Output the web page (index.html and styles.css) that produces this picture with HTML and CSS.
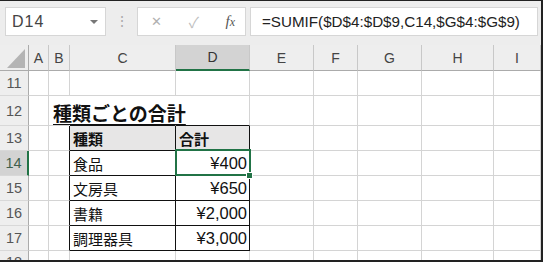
FILE: index.html
```html
<!DOCTYPE html>
<html lang="ja">
<head>
    <meta charset="UTF-8">
    <title>SUMIF - 種類ごとの合計</title>
    <link rel="stylesheet" href="styles.css">
</head>
<body>
<div class="frame">
    <!-- Name box + formula bar -->
    <div class="toolbar">
        <div class="name-box">
            <span>D14</span>
            <span class="drop"></span>
        </div>
        <div class="grip">⋮</div>
        <div class="fx-buttons">
            <span class="btn-x">✕</span>
            <span class="btn-ok">✓</span>
            <span class="btn-fx"><i>f</i><i>x</i></span>
        </div>
        <div class="formula">=SUMIF($D$4:$D$9,C14,$G$4:$G$9)</div>
    </div>

    <div class="sheet">
        <!-- column headers -->
        <div class="corner">
            <svg width="29" height="26" viewBox="0 0 29 26"><polygon points="25,4 25,23 7,23" fill="#b4b4b4"/></svg>
        </div>
        <div class="ch">A</div>
        <div class="ch">B</div>
        <div class="ch">C</div>
        <div class="ch ch-sel">D</div>
        <div class="ch">E</div>
        <div class="ch">F</div>
        <div class="ch">G</div>
        <div class="ch">H</div>
        <div class="ch">I</div>

        <!-- 11 -->
        <div class="rh">11</div>
        <div class="c"></div><div class="c"></div><div class="c"></div><div class="c"></div>
        <div class="c"></div><div class="c"></div><div class="c"></div><div class="c"></div><div class="c"></div>

        <!-- 12 -->
        <div class="rh">12</div>
        <div class="c"></div>
        <div class="c no-r"><span class="title">種類ごとの合計</span></div>
        <div class="c no-r edge-b"></div>
        <div class="c edge-b"></div>
        <div class="c"></div><div class="c"></div><div class="c"></div><div class="c"></div><div class="c"></div>

        <!-- 13 -->
        <div class="rh">13</div>
        <div class="c"></div>
        <div class="c edge-r"></div>
        <div class="c t th">種類</div>
        <div class="c t th">合計</div>
        <div class="c"></div><div class="c"></div><div class="c"></div><div class="c"></div><div class="c"></div>

        <!-- 14 -->
        <div class="rh rh-sel">14</div>
        <div class="c"></div>
        <div class="c edge-r"></div>
        <div class="c t">食品</div>
        <div class="c t num active">¥400</div>
        <div class="c"></div><div class="c"></div><div class="c"></div><div class="c"></div><div class="c"></div>

        <!-- 15 -->
        <div class="rh">15</div>
        <div class="c"></div>
        <div class="c edge-r"></div>
        <div class="c t">文房具</div>
        <div class="c t num">¥650</div>
        <div class="c"></div><div class="c"></div><div class="c"></div><div class="c"></div><div class="c"></div>

        <!-- 16 -->
        <div class="rh">16</div>
        <div class="c"></div>
        <div class="c edge-r"></div>
        <div class="c t">書籍</div>
        <div class="c t num">¥2,000</div>
        <div class="c"></div><div class="c"></div><div class="c"></div><div class="c"></div><div class="c"></div>

        <!-- 17 -->
        <div class="rh">17</div>
        <div class="c"></div>
        <div class="c edge-r"></div>
        <div class="c t">調理器具</div>
        <div class="c t num">¥3,000</div>
        <div class="c"></div><div class="c"></div><div class="c"></div><div class="c"></div><div class="c"></div>

        <!-- 18 (cut off) -->
        <div class="rh rh-top">18</div>
        <div class="c"></div><div class="c"></div><div class="c"></div><div class="c"></div>
        <div class="c"></div><div class="c"></div><div class="c"></div><div class="c"></div><div class="c"></div>
    </div>
</div>
</body>
</html>
```

FILE: styles.css
```css
body {
    margin: 0;
    font-family: "Liberation Sans", "Noto Sans CJK JP", sans-serif;
    background: #fff;
}

.frame {
    width: 543px;
    height: 262px;
    box-sizing: border-box;
    border-top: 1px solid #222;
    border-right: 2px solid #222;
    border-bottom: 2px solid #222;
    display: flex;
    flex-direction: column;
    overflow: hidden;
}

/* ---------- toolbar ---------- */
.toolbar {
    height: 44px;
    flex: none;
    background: #ededed;
    display: flex;
    align-items: flex-start;
    padding: 6px 0 0 5px;
    box-sizing: border-box;
}

.name-box,
.fx-buttons,
.formula {
    height: 29px;
    box-sizing: border-box;
    background: #fff;
    border: 1px solid #d6d6d6;
    display: flex;
    align-items: center;
}

.name-box {
    width: 101px;
    padding: 0 6px;
    justify-content: space-between;
    font-size: 16px;
    letter-spacing: 1px;
    color: #444;
}

.drop {
    width: 0;
    height: 0;
    border-left: 4px solid transparent;
    border-right: 4px solid transparent;
    border-top: 4px solid #777;
    margin-right: 1px;
}

.grip {
    width: 31px;
    text-align: center;
    color: #aaa;
    font-size: 14px;
    line-height: 29px;
}

.fx-buttons {
    width: 109px;
    padding: 0 10px 0 13px;
    justify-content: space-between;
}

.btn-x {
    color: #b0b0b0;
    font-size: 13px;
}

.btn-ok {
    color: #c0c0c0;
    font-size: 15px;
}

.btn-fx {
    font-family: "Liberation Serif", serif;
    font-style: italic;
    font-size: 15px;
    color: #555;
}

.btn-fx i:last-child {
    font-size: 12px;
}

.formula {
    margin-left: 4px;
    width: 288px;
    padding-left: 11px;
    font-size: 15.2px;
    color: #222;
    white-space: nowrap;
}

/* ---------- grid ---------- */
.sheet {
    flex: 1;
    display: grid;
    grid-template-columns: 29px 20px 21px 106px 74px 64px 44px 64px 72px 1fr;
    grid-template-rows: 26px 25px 30px 25px 25px 25px 25px 25px 1fr;
    overflow: hidden;
}

.corner {
    background: #eeeeee;
    border-right: 1px solid #ababab;
    border-bottom: 1px solid #ababab;
    box-sizing: border-box;
}

.corner svg {
    display: block;
}

.ch {
    background: #eeeeee;
    border-right: 1px solid #c8c8c8;
    border-bottom: 1px solid #ababab;
    box-sizing: border-box;
    display: flex;
    align-items: center;
    justify-content: center;
    font-size: 14px;
    color: #444;
}

.ch-sel {
    background: #d3d3d3;
    border-bottom: 2px solid #217346;
    color: #333;
}

.rh {
    background: #eeeeee;
    border-right: 1px solid #ababab;
    border-bottom: 1px solid #d8d8d8;
    box-sizing: border-box;
    display: flex;
    align-items: center;
    justify-content: center;
    font-size: 14.5px;
    color: #555;
}

.rh-sel {
    background: #d3d3d3;
    border-right: 2px solid #217346;
    color: #3f5f4c;
}

.rh-top {
    align-items: flex-start;
    padding-top: 3px;
}

.c {
    border-right: 1px solid #d4d4d4;
    border-bottom: 1px solid #d4d4d4;
    box-sizing: border-box;
    display: flex;
    align-items: center;
    padding: 0 3px;
    font-size: 15px;
    color: #111;
    white-space: nowrap;
    min-width: 0;
}

.no-r {
    border-right-color: transparent;
}

.edge-b {
    border-bottom-color: #111;
}

.edge-r {
    border-right-color: #111;
}

/* table body */
.t {
    border-right-color: #111;
    border-bottom-color: #111;
}

.th {
    background: #e7e6e6;
    font-weight: bold;
}

.num {
    justify-content: flex-end;
    padding-right: 2px;
    font-size: 16.5px;
}

.title {
    font-size: 19px;
    font-weight: bold;
    text-decoration: underline;
    text-underline-offset: 3px;
    padding-top: 4px;
    margin-left: 1px;
}

/* active cell */
.active {
    position: relative;
}

.active::after {
    content: "";
    position: absolute;
    top: -2px;
    left: -1px;
    right: -2px;
    bottom: -1px;
    border: 2px solid #217346;
}

.active::before {
    content: "";
    position: absolute;
    right: -4px;
    bottom: -4px;
    width: 5px;
    height: 5px;
    background: #217346;
    border: 1px solid #fff;
    z-index: 1;
}
```
